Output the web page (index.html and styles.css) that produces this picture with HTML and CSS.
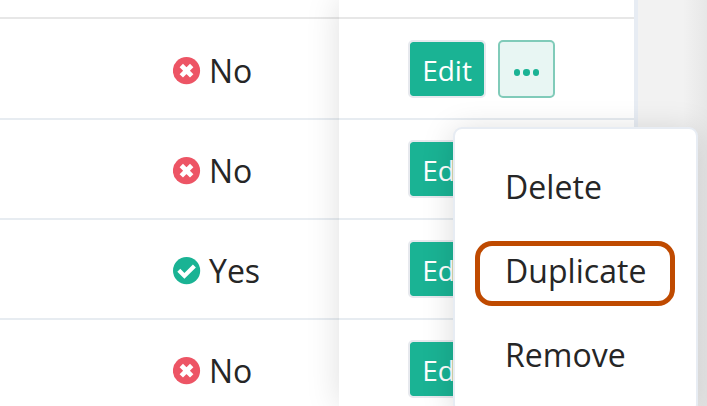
FILE: index.html
```html
<!DOCTYPE html>
<html lang="en">
<head>
<meta charset="utf-8">
<title>Records</title>
<link rel="stylesheet" href="styles.css">
</head>
<body>
<svg width="0" height="0" class="sprite" aria-hidden="true">
  <symbol id="cross" viewBox="0 0 28 28"><circle cx="13.5" cy="13.7" r="13.6" fill="#ed5565"/><path d="M8.3 8.5l10.4 10.4M18.7 8.5L8.3 18.9" stroke="#fff" stroke-width="4.8" stroke-linecap="butt"/></symbol>
  <symbol id="check" viewBox="0 0 28 28"><circle cx="13.6" cy="13.7" r="13.6" fill="#1ab394"/><path d="M5.8 13.3l5.6 5.6 10-10" fill="none" stroke="#fff" stroke-width="4.2" stroke-linejoin="miter"/></symbol>
</svg>
<div class="page">
  <div class="status-col">
    <div class="head"></div>
    <div class="row first"><svg class="icon"><use href="#cross"/></svg><span>No</span></div>
    <div class="row"><svg class="icon"><use href="#cross"/></svg><span>No</span></div>
    <div class="row"><svg class="icon"><use href="#check"/></svg><span>Yes</span></div>
    <div class="row"><svg class="icon"><use href="#cross"/></svg><span>No</span></div>
  </div>
  <div class="action-col">
    <div class="head"></div>
    <div class="row first"><button class="edit">Edit</button><button class="more" aria-label="More"><i></i><i></i><i></i></button></div>
    <div class="row"><button class="edit">Edit</button></div>
    <div class="row"><button class="edit">Edit</button></div>
    <div class="row"><button class="edit">Edit</button></div>
  </div>
  <div class="gutter"></div>
  <div class="menu">
    <div class="item">Delete</div>
    <div class="item active">Duplicate</div>
    <div class="item">Remove</div>
  </div>
</div>
</body>
</html>
```
FILE: styles.css
```css
* { box-sizing: border-box; }
body { margin: 0; overflow: hidden; font-family: "Open Sans", sans-serif; color: #262626; }
.sprite { position: absolute; }
.page { position: relative; display: flex; width: 707px; height: 406px; overflow: hidden; background: #fff; }
.status-col { flex: 0 0 339px; }
.action-col { flex: 0 0 299px; border-right: 4px solid #e7ecf3; box-shadow: 0 0 32px rgba(0,0,0,.13); clip-path: inset(0 0 0 -40px); background: #fff; }
.head { height: 19px; border-bottom: 2px solid #e7e7e7; }
.row { height: 100px; display: flex; align-items: center; border-bottom: 2px solid #e7ecf1; }
.first { height: 101px; }
.status-col .row { padding: 3px 0 0 173px; font-size: 32px; gap: 8px; }
.status-col .first { padding-top: 4px; }
.icon { width: 28px; height: 28px; flex: none; }
.row span { line-height: 44px; }
.action-col .row { padding-left: 69px; gap: 12px; }
button { font-family: inherit; margin: 0; padding: 0; }
.edit { width: 78px; height: 58px; border: 2px solid #e7e9ee; border-radius: 5px; background: #1ab394; color: #fff; font-size: 28px; line-height: 52px; padding-top: 2px; background-clip: padding-box; }
.more { width: 57px; height: 58px; border: 2px solid #80cbb9; border-radius: 5px; background: #e8f6f3; display: flex; align-items: center; justify-content: center; gap: 3px; padding-top: 8px; }
.more i { width: 6.3px; height: 6.3px; border-radius: 50%; background: #1ab394; }
.gutter { flex: 1; background: linear-gradient(to right, #f2f2f2 45px, #e7e7e7); }
.menu { position: absolute; left: 453px; top: 127px; width: 245px; height: 286px; border: 2px solid #e7ecf3; border-radius: 9px; background: #fff; box-shadow: 0 4px 32px rgba(0,0,0,.15); padding: 28px 21px 0 20px; }
.item { height: 65px; margin-bottom: 19px; padding: 0 0 0 30px; font-size: 32px; line-height: 60px; letter-spacing: .05px; }
.active { border: 5px solid #bf4a00; border-radius: 17px; padding-left: 25px; line-height: 50px; }
```
